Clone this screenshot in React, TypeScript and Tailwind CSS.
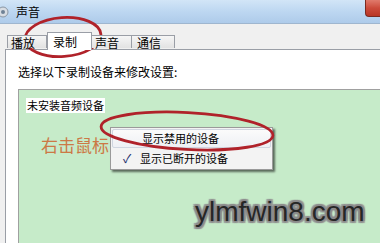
import React from "react";

const cjk = "font-['Noto_Sans_CJK_SC','Noto_Sans',sans-serif]";

export default function App() {
  return (
    <div className={`relative w-[380px] h-[243px] overflow-hidden bg-[#f0f0f0] flex flex-col ${cjk}`}>
      {/* Title bar */}
      <div className="h-[24px] shrink-0 flex items-center bg-gradient-to-b from-[#d2e5f7] via-[#bdd7f1] to-[#aecbea] border-b border-[#9fb6cf]">
        <svg width="12" height="14" viewBox="0 0 12 14" className="ml-[-2px] mr-[6px]">
          <circle cx="5" cy="7" r="5" fill="#d8dde3" stroke="#8a96a3" strokeWidth="1" />
          <circle cx="5" cy="7" r="2" fill="#6f8296" />
        </svg>
        <span className="text-[12px] leading-none text-black">声音</span>
        <div className="ml-auto self-start w-[15px] h-[17px] rounded-bl-[4px] bg-gradient-to-b from-[#e07a6c] via-[#cc4b3b] to-[#b83524] border-l border-b border-[#7a2a20]" />
      </div>

      {/* Tabs */}
      <div className="h-[25px] shrink-0 flex items-end pl-[7px] relative z-10">
        <div className="w-[40px] h-[13px] mb-[1px] border border-b-0 border-[#9a9ea6] bg-gradient-to-b from-[#f6f6f6] to-[#e2e2e2] pl-[3px] text-[12px] leading-[13px] text-black">播放</div>
        <div className="w-[45px] h-[18px] mb-[-1px] border border-b-0 border-[#9a9ea6] bg-white pl-[5px] pt-[1px] text-[12px] leading-[15px] text-black">录制</div>
        <div className="w-[40px] h-[13px] mb-[1px] border border-b-0 border-l-0 border-[#9a9ea6] bg-gradient-to-b from-[#f6f6f6] to-[#e2e2e2] pl-[3px] text-[12px] leading-[13px] text-black">声音</div>
        <div className="w-[43px] h-[13px] mb-[1px] border border-b-0 border-l-0 border-[#9a9ea6] bg-gradient-to-b from-[#f6f6f6] to-[#e2e2e2] pl-[5px] text-[12px] leading-[13px] text-black">通信</div>
      </div>

      {/* Content panel */}
      <div className="flex-1 ml-[5px] bg-white border-l border-t border-[#9a9ea6] flex flex-col pl-[12px] pt-[15px]">
        <div className="text-[12px] leading-[14px] text-black">选择以下录制设备来修改设置:</div>
        <div className="mt-[10px] flex-1 border border-[#a0a0a0] border-r-0 border-b-0 bg-[#c6ebc9] flex flex-col items-start pl-[7px] pt-[8px]">
          <span className="bg-white text-[11px] leading-[15px] text-black px-[1px]">未安装音频设备</span>
          <div className="mt-[22px] ml-[15px] text-[17px] leading-[20px] text-[#cc7845]">右击鼠标</div>
        </div>
      </div>

      {/* Context menu */}
      <div className="absolute left-[110px] top-[127px] w-[163px] h-[43px] bg-[#f3f3f3] border border-[#9a9a9a] shadow-[2px_2px_2px_rgba(0,0,0,0.55)] flex flex-col p-[1px]">
        <div className="h-[19px] flex items-center pl-[29px] bg-gradient-to-b from-[#fbfbfb] to-[#eef0f4] border border-[#d0d6e0] rounded-[2px] text-[11px] text-black">
          显示禁用的设备
        </div>
        <div className="h-[20px] flex items-center text-[11px] text-black">
          <span className="w-[28px] pl-[11px] text-[12px] leading-none text-[#1b2d6b]">✓</span>
          显示已断开的设备
        </div>
      </div>

      {/* Red ellipses */}
      <svg className="absolute left-0 top-0 pointer-events-none" width="380" height="243" viewBox="0 0 380 243">
        <ellipse cx="63" cy="37" rx="38" ry="19.5" fill="none" stroke="#b0222a" strokeWidth="2.8" transform="rotate(-4 63 37)" />
        <ellipse cx="187" cy="131" rx="86" ry="18.5" fill="none" stroke="#b0222a" strokeWidth="2.8" transform="rotate(3 187 131)" />
      </svg>

      {/* Watermark */}
      <div className="absolute left-[195px] top-[198px] text-[28px] leading-[28px] font-['Liberation_Sans',sans-serif] text-[#262626] [text-shadow:1px_0_0_#8a8a8a,-1px_0_0_#8a8a8a,0_1px_0_#8a8a8a,0_-1px_0_#8a8a8a,2px_0_1px_#8a8a8a,-2px_0_1px_#8a8a8a,0_2px_1px_#8a8a8a,0_-2px_1px_#8a8a8a,2px_2px_1px_#9a9a9a,-2px_-2px_1px_#9a9a9a,2px_-2px_1px_#9a9a9a,-2px_2px_1px_#9a9a9a]">
        ylmfwin8.com
      </div>
    </div>
  );
}
